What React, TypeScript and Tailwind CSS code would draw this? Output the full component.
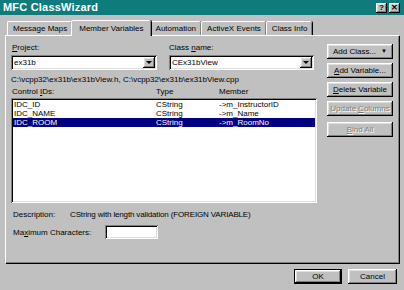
import React from 'react';

const raised = "shadow-[inset_-1px_-1px_#000,inset_1px_1px_#fff,inset_-2px_-2px_#808080,inset_2px_2px_#dfdfdf]";
const sunken = "shadow-[inset_1px_1px_#808080,inset_-1px_-1px_#fff,inset_2px_2px_#000,inset_-2px_-2px_#dfdfdf]";

function U({ children }: { children: React.ReactNode }) {
  return <span className="underline underline-offset-1">{children}</span>;
}

function Combo({ value, width }: { value: string; width: string }) {
  return (
    <div className={`flex items-center h-[15px] bg-white pl-[3px] pr-[2px] ${sunken} ${width}`}>
      <span className="flex-1">{value}</span>
      <div className={`w-[12px] h-[11px] bg-[#c0c0c0] flex items-center justify-center ${raised}`}>
        <div className="w-0 h-0 border-l-[3px] border-r-[3px] border-t-[3px] border-l-transparent border-r-transparent border-t-black" />
      </div>
    </div>
  );
}

function Btn({ children, disabled }: { children: React.ReactNode; disabled?: boolean }) {
  return (
    <div
      className={`h-[15px] w-[66px] flex items-center justify-center whitespace-nowrap ${raised} ${
        disabled ? 'text-[#808080] [text-shadow:1px_1px_#fff]' : 'text-black'
      }`}
    >
      {children}
    </div>
  );
}

const tabs = ['Message Maps', 'Member Variables', 'Automation', 'ActiveX Events', 'Class Info'];

const rows = [
  { id: 'IDC_ID', type: 'CString', member: '->m_InstructorID' },
  { id: 'IDC_NAME', type: 'CString', member: '->m_Name' },
  { id: 'IDC_ROOM', type: 'CString', member: '->m_RoomNo', selected: true },
];

export default function App() {
  return (
    <div className="w-[404px] h-[290px] bg-[#c0c0c0] flex flex-col font-['Liberation_Sans',Arial,sans-serif] text-[8px] leading-[9px] text-black overflow-hidden">
      {/* title bar */}
      <div className="h-[15px] bg-[#0f7b7b] flex items-center justify-between pl-[3px] pr-[4px]">
        <span className="text-white font-bold text-[11px] tracking-[0.2px]">MFC ClassWizard</span>
        <div className="flex gap-[2px]">
          <div className={`w-[11px] h-[10px] bg-[#c0c0c0] flex items-center justify-center font-bold text-[8px] ${raised}`}>?</div>
          <div className={`w-[11px] h-[10px] bg-[#c0c0c0] flex items-center justify-center font-bold text-[8px] ${raised}`}>✕</div>
        </div>
      </div>

      {/* tabs */}
      <div className="flex items-end h-[20px] pl-[7px]">
        {tabs.map((t, i) => {
          const sel = i === 1;
          return (
            <div
              key={t}
              className={`relative flex items-center justify-center border-t border-l border-white rounded-tl-[2px] rounded-tr-[2px] shadow-[1px_0_#000,inset_-1px_0_#808080] ${
                sel ? 'h-[16px] -mx-[1px] z-10 bg-[#c0c0c0] -mb-[1px] pb-[1px] px-[7px]' : 'h-[14px] px-[5px]'
              }`}
            >
              {t}
            </div>
          );
        })}
      </div>

      {/* panel */}
      <div className="mx-[5px] h-[228px] border-t border-l border-white shadow-[1px_1px_#000,inset_-1px_-1px_#808080] flex flex-col">
        <div className="flex">
          <div className="w-[312px] pl-[5px] flex flex-col">
            <div className="flex mt-[7px] h-[10px]">
              <span className="w-[158px] pl-[1px]"><U>P</U>roject:</span>
              <span>Class <U>n</U>ame:</span>
            </div>
            <div className="flex gap-[12px] mt-[2px]">
              <Combo value="ex31b" width="w-[146px]" />
              <Combo value="CEx31bView" width="w-[145px]" />
            </div>
            <div className="mt-[5px] h-[10px]">C:\vcpp32\ex31b\ex31bView.h, C:\vcpp32\ex31b\ex31bView.cpp</div>
            <div className="flex mt-[2px] h-[10px]">
              <span className="w-[145px] pl-[1px]">Control <U>I</U>Ds:</span>
              <span className="w-[63px]">Type</span>
              <span>Member</span>
            </div>
            <div className={`mt-[1px] w-[306px] h-[105px] bg-white p-[2px] ${sunken}`}>
              {rows.map((r) => (
                <div
                  key={r.id}
                  className={`flex h-[9px] items-center pl-[1px] ${r.selected ? 'bg-[#000080] text-white' : ''}`}
                >
                  <span className="w-[142px]">{r.id}</span>
                  <span className="w-[63px]">{r.type}</span>
                  <span>{r.member}</span>
                </div>
              ))}
            </div>
          </div>
          <div className="ml-[9px] mt-[8px] flex flex-col gap-[4px]">
            <Btn>Add Class... <span className="ml-[5px] text-[6px]">▼</span></Btn>
            <Btn><U>A</U>dd Variable...</Btn>
            <Btn><U>D</U>elete Variable</Btn>
            <Btn disabled>
              <span>Update</span>
              <span className="ml-[2px]"><U>C</U>olumns</span>
            </Btn>
            <div className="mt-[2px]">
              <Btn disabled><U>B</U>ind All</Btn>
            </div>
          </div>
        </div>
        <div className="flex mt-[7px] pl-[7px] h-[10px]">
          <span className="w-[57px]">Description:</span>
          <span className="tracking-[-0.15px]">CString with length validation (FOREIGN VARIABLE)</span>
        </div>
        <div className="flex items-center mt-[5px] pl-[7px]">
          <span className="w-[92px]">Ma<U>x</U>imum Characters:</span>
          <div className={`w-[53px] h-[14px] bg-white ${sunken}`} />
        </div>
      </div>

      {/* footer */}
      <div className="flex justify-end gap-[6px] pr-[7px] mt-[6px]">
        <div className="h-[15px] w-[48px] flex items-center justify-center border border-black">
          <div className={`w-full h-full flex items-center justify-center ${raised}`}>OK</div>
        </div>
        <div className={`h-[15px] w-[49px] flex items-center justify-center ${raised}`}>Cancel</div>
      </div>
    </div>
  );
}
